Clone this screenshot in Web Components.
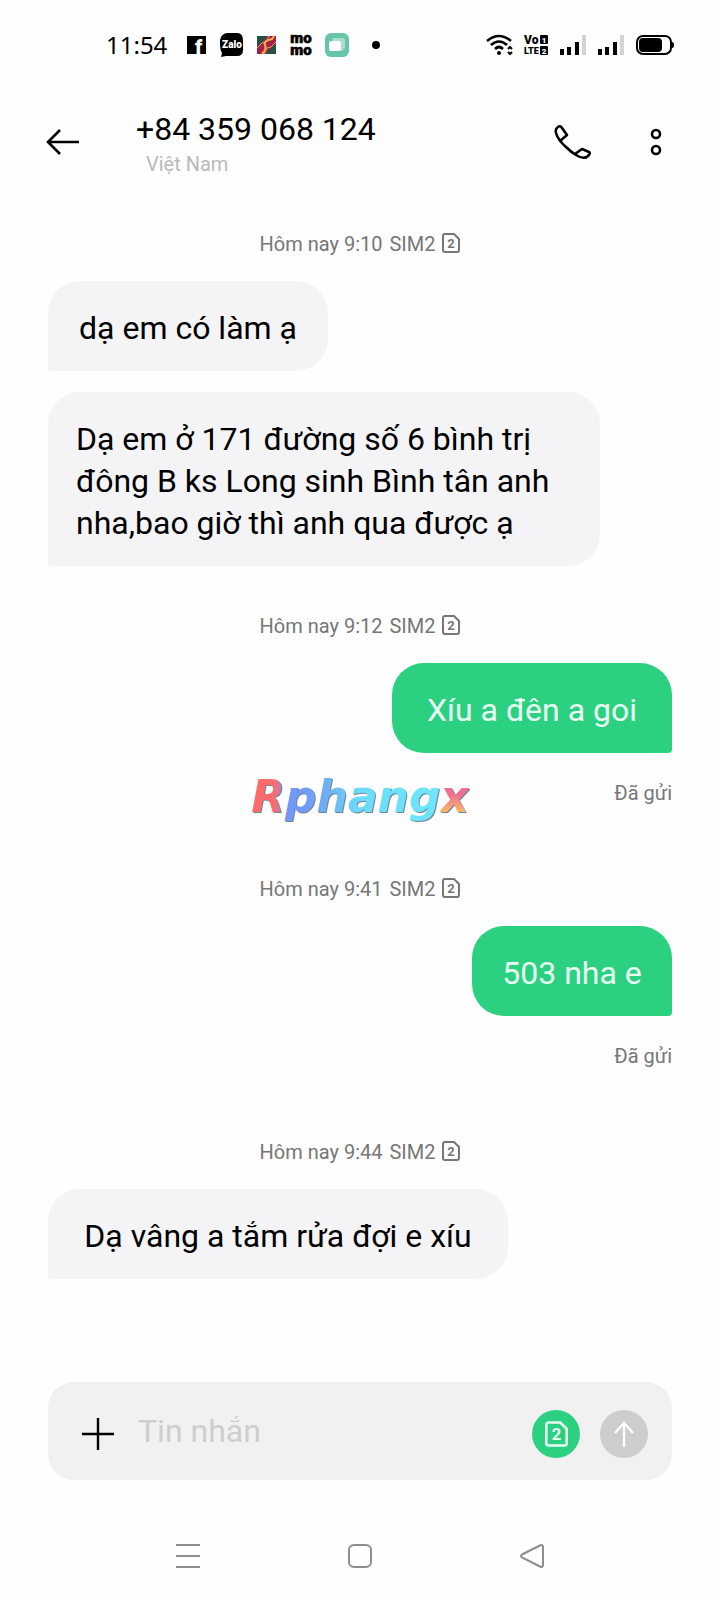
<!DOCTYPE html>
<html lang="vi">
<head>
<meta charset="utf-8">
<meta name="viewport" content="width=device-width, initial-scale=1">
<title>Tin nhắn</title>
<style>
  body { margin: 0; background: #fefefe; font-family: Roboto, "Noto Sans", sans-serif; color: #000; }
</style>
</head>
<body>
<chat-app></chat-app>

<script>
const define = (name, html) => {
  const template = document.createElement('template');
  template.innerHTML = html;
  customElements.define(name, class extends HTMLElement {
    constructor() {
      super();
      this.attachShadow({ mode: 'open' }).append(template.content.cloneNode(true));
    }
  });
};

define('sim-icon', `
  <style>
    :host { display: block; width: 18px; height: 20px; }
    svg { display: block; width: 100%; height: 100%; }
    text { font: 700 13px Roboto, sans-serif; fill: currentColor; }
  </style>
  <svg viewBox="0 0 18 20" aria-hidden="true">
    <path d="M3 1H12L17 6V17Q17 19 15 19H3Q1 19 1 17V3Q1 1 3 1Z" fill="none" stroke="currentColor" stroke-width="2"/>
    <text x="9" y="15" text-anchor="middle">2</text>
  </svg>`);

define('status-bar', `
  <style>
    :host { display: flex; justify-content: space-between; align-items: center; height: 90px; padding: 0 46px 0 106px; }
    div { display: flex; align-items: center; }
    .left { gap: 13px; }
    .right { gap: 12px; }
    time { font: 24px/32px "Noto Sans", sans-serif; margin-right: 7px; }
    svg { display: block; overflow: visible; }
    text { font-family: Roboto, sans-serif; font-weight: 900; }
  </style>
  <div class="left">
    <time>11:54</time>
    <svg width="20" height="28"><path d="M0 5H19V23H0Z"/><text x="8" y="23" font-size="20" fill="#fff">f</text></svg>
    <svg width="24" height="24"><path d="M7 0H18Q23 1 23 7V17Q23 23 17 23H6L1 24L2 20Q0 17 0 12V7Q1 1 7 0Z"/><text x="12" y="15" font-size="10" fill="#fff" text-anchor="middle">Zalo</text></svg>
    <svg width="20" height="20"><path fill="#a82045" d="M0 1H19V19H0Z"/><path fill="#235340" d="M0 1H11L0 12ZM19 8V19H8Z"/><path d="M0 13L5 8L9 7L12 1M7 19L10 13L14 12L19 7" fill="none" stroke="#e5a267" stroke-width="1"/><path d="M5 19Q10 14 8 10T15 4L17 1" fill="none" stroke="#efb14c" stroke-width="2"/></svg>
    <svg width="22" height="32"><text font-size="15" text-anchor="middle" stroke="#000" stroke-width=".6"><tspan x="11" y="14">mo</tspan><tspan x="11" y="26">mo</tspan></text></svg>
    <svg width="24" height="24"><rect width="24" height="24" rx="6" fill="#66c5a6"/><path d="M8 5H18Q20 5 20 7V15L17 18H8Q6 18 6 16Z" fill="#a9e0cd"/><path d="M6 8H14Q16 8 16 10V15Q16 18 13 18H6Q4 18 4 16V10Q4 8 6 8Z" fill="#fff"/></svg>
    <svg width="28" height="20"><circle cx="14" cy="10" r="4"/></svg>
  </div>
  <div class="right">
    <svg width="26" height="22" fill="none" stroke="#000" stroke-width="2.6"><path d="M1 7Q13-3 25 7M5 11Q13 4 21 11M9 15Q13 11 17 15"/><circle cx="13" cy="19" r="2" fill="#000" stroke="none"/><path d="M22 15L24 13L26 15M22 18L24 20L26 18" stroke-width="2"/></svg>
    <svg width="24" height="22"><text x="0" y="10" font-size="12">Vo</text><text x="0" y="20" font-size="9">LTE</text><rect x="16" y="1" width="8" height="9" rx="1"/><rect x="16" y="12" width="8" height="9" rx="1"/><g fill="#fff" font-size="8" text-anchor="middle"><text x="20" y="9">1</text><text x="20" y="20">2</text></g></svg>
    <svg width="26" height="20"><path d="M0 14h4v6H0ZM7 12h4v8H7ZM15 7h4v13h-4Z"/><path d="M22 0h4v20h-4Z" fill="#d3d3d3"/></svg>
    <svg width="26" height="20"><path d="M0 14h4v6H0ZM7 12h4v8H7ZM15 7h4v13h-4Z"/><path d="M22 0h4v20h-4Z" fill="#d3d3d3"/></svg>
    <svg width="38" height="20"><rect x="1" y="1" width="34" height="18" rx="6" fill="none" stroke="#000" stroke-width="2"/><rect x="3" y="3" width="23" height="14" rx="4"/><path d="M36 7Q38 7 38 10T36 13Z"/></svg>
  </div>`);

define('chat-header', `
  <style>
    :host { display: flex; align-items: center; height: 80px; padding: 12px 44px 0 43px; }
    button { width: 40px; height: 40px; padding: 0; border: 0; background: none; color: #000; }
    svg { display: block; fill: none; stroke: currentColor; stroke-width: 2.6; }
    .title { flex: 1; display: grid; gap: 4px; margin-left: 53px; padding-top: 2px; }
    h1 { margin: 0; font-size: 32px; line-height: 38px; font-weight: 400; }
    p { margin: 0 0 0 10px; font-size: 20px; line-height: 24px; color: #b9b9b9; }
    .actions { display: flex; gap: 44px; }
  </style>
  <button aria-label="Quay lại"><svg width="40" height="40"><path d="M36 20H5M17 8L5 20L17 32"/></svg></button>
  <div class="title"><h1><slot name="number"></slot></h1><p><slot name="place"></slot></p></div>
  <div class="actions">
    <button aria-label="Gọi"><svg width="40" height="40" stroke-linejoin="round"><path d="M8 19L15 13L10 6Q8 3 6 5Q3 7 4 11Q6 18 14 25Q19 30 24 33Q32 38 36 34Q39 31 37 30L30 27L23 32"/></svg></button>
    <button aria-label="Tùy chọn"><svg width="40" height="40"><circle cx="20" cy="12" r="4"/><circle cx="20" cy="28" r="4"/></svg></button>
  </div>`);

define('time-stamp', `
  <style>
    :host { display: flex; justify-content: center; align-items: center; gap: 7px; margin: 0 0 25px; font-size: 20px; line-height: 24px; color: #767676; }
    sim-icon { margin-bottom: 2px; }
  </style>
  <slot></slot><span>SIM2</span><sim-icon></sim-icon>`);

define('chat-bubble', `
  <style>
    :host { display: block; box-sizing: border-box; width: fit-content; min-width: var(--bubble-width, 200px); max-width: 552px; padding: 26px 28px 22px;
      border-radius: 32px 32px 32px 4px; background: #f4f4f7; font-size: 32px; line-height: 42px; text-align: center; }
    :host([sent]) { margin-left: auto; border-radius: 32px 32px 4px 32px; background: #2bd181; color: #e9fff4; }
    :host([long]) { text-align: left; }
  </style>
  <slot></slot>`);

define('delivery-status', `
  <style>
    :host { display: block; position: relative; margin: 28px 0 72px; text-align: right; font-size: 20px; line-height: 24px; color: #767676; }
    ::slotted(brand-mark) { position: absolute; left: 50%; top: -6px; transform: translateX(-50%); }
  </style>
  Đã gửi<slot></slot>`);

define('brand-mark', `
  <style>
    :host { display: block; white-space: nowrap; font: italic 700 44px/44px "DejaVu Sans", sans-serif; filter: drop-shadow(1px 1px 0 #6f8794); }
    span { display: inline-block; padding-bottom: 4px; background-clip: text; -webkit-background-clip: text; color: transparent; }
    .word { background-image: linear-gradient(90deg, #ff6b6b 0 12%, #7198fb 20% 28%, #6fb0f5 40%, #6bdcfb 58%, #6fe6fb); }
    .end { background-image: linear-gradient(#ee6f91 40%, #ffbf65 80%); }
  </style>
  <span class="word">Rphang</span><span class="end">x</span>`);

define('message-composer', `
  <style>
    :host { display: block; margin: 0 48px 32px; }
    form { display: flex; align-items: center; height: 98px; box-sizing: border-box; padding: 6px 24px 0 34px; border-radius: 26px; background: #f1f1f1; }
    button { flex: none; display: grid; place-items: center; width: 48px; height: 48px; padding: 0; border: 0; border-radius: 50%; color: #fff; }
    .add { width: 32px; background: none; color: #000; }
    .sim { background: #2bd181; color: #e9fff4; }
    .send { margin-left: 20px; background: #cdcdcd; }
    svg { display: block; fill: none; stroke: currentColor; stroke-width: 2.4; }
    input { flex: 1; min-width: 0; height: 42px; margin: 0 20px 6px 24px; padding: 0; border: 0; outline: 0; background: none; font: 32px/42px Roboto, "Noto Sans", sans-serif; }
    input::placeholder { color: #cecece; opacity: 1; }
    sim-icon { width: 23px; height: 26px; }
  </style>
  <form>
    <button type="button" class="add" aria-label="Thêm"><svg width="32" height="32"><path d="M16 0V32M0 16H32"/></svg></button>
    <input type="text" placeholder="Tin nhắn" aria-label="Tin nhắn">
    <button type="button" class="sim" aria-label="SIM 2"><sim-icon></sim-icon></button>
    <button type="button" class="send" aria-label="Gửi"><svg width="24" height="28"><path d="M12 27V3M3 13L12 3L21 13"/></svg></button>
  </form>`);

define('nav-bar', `
  <style>
    :host { display: flex; justify-content: space-between; align-items: center; height: 88px; padding: 0 168px; }
    button { width: 40px; height: 40px; padding: 8px; border: 0; background: none; }
    svg { display: block; fill: none; stroke: #8e8e8e; stroke-width: 2; }
  </style>
  <button aria-label="Gần đây"><svg width="24" height="24"><path d="M0 1H24M0 12H24M0 23H24"/></svg></button>
  <button aria-label="Trang chủ"><svg width="24" height="24"><rect x="1" y="1" width="22" height="22" rx="5"/></svg></button>
  <button aria-label="Trở lại"><svg width="24" height="24"><path d="M2 10.5L20 1.5Q23 0 23 3V21Q23 24 20 22.5L2 13.5Q0 12 2 10.5Z"/></svg></button>`);

define('chat-app', `
  <style>
    :host { display: flex; flex-direction: column; min-height: 100vh; }
    main { flex: 1; padding: 50px 48px 0; }
    chat-bubble + chat-bubble { margin-top: 21px; }
    chat-bubble + time-stamp { margin-top: 48px; }
    .medium { --bubble-width: 280px; }
    .wide { --bubble-width: 460px; }
    .full { --bubble-width: 552px; }
  </style>
  <status-bar></status-bar>
  <chat-header><span slot="number">+84 359 068 124</span><span slot="place">Việt Nam</span></chat-header>
  <main>
    <time-stamp><time>Hôm nay 9:10</time></time-stamp>
    <chat-bubble class="medium">dạ em có làm ạ</chat-bubble>
    <chat-bubble class="full" long>Dạ em ở 171 đường số 6 bình trị đông B ks Long sinh Bình tân anh nha,bao giờ thì anh qua được ạ</chat-bubble>
    <time-stamp><time>Hôm nay 9:12</time></time-stamp>
    <chat-bubble class="medium" sent>Xíu a đên a goi</chat-bubble>
    <delivery-status><brand-mark></brand-mark></delivery-status>
    <time-stamp><time>Hôm nay 9:41</time></time-stamp>
    <chat-bubble sent>503 nha e</chat-bubble>
    <delivery-status></delivery-status>
    <time-stamp><time>Hôm nay 9:44</time></time-stamp>
    <chat-bubble class="wide">Dạ vâng a tắm rửa đợi e xíu</chat-bubble>
  </main>
  <message-composer></message-composer>
  <nav-bar></nav-bar>`);
</script>
</body>
</html>
